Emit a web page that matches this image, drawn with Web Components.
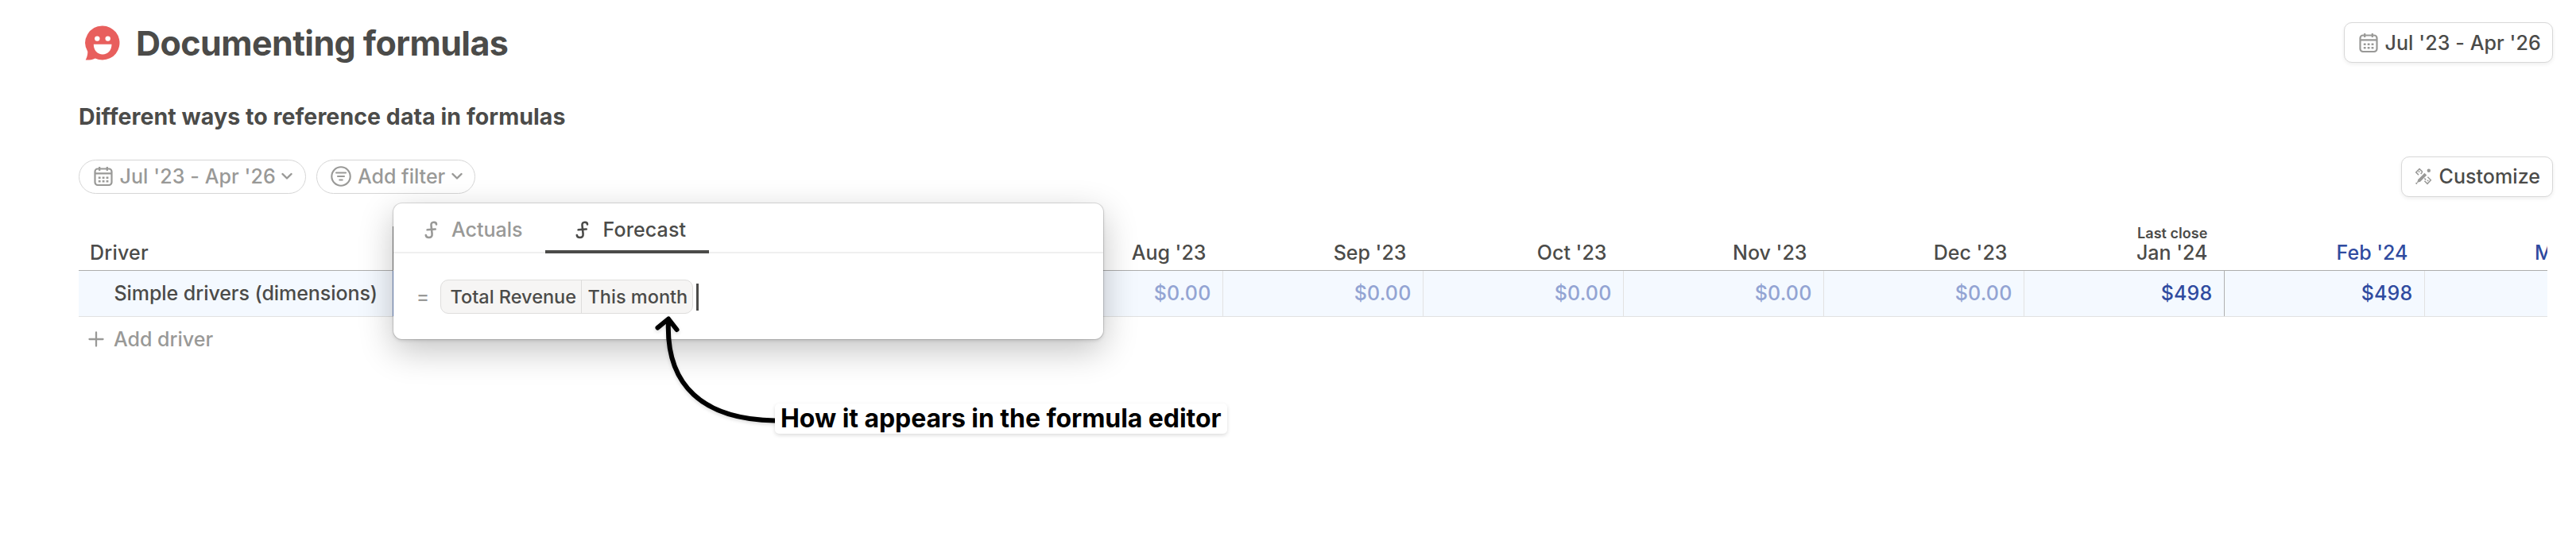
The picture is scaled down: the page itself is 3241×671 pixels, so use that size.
<!DOCTYPE html>
<html lang="en">
<head>
<meta charset="utf-8">
<title>Documenting formulas</title>
<style>
html,body{margin:0;background:#fff}
body{width:3241px;height:671px;overflow:hidden}
</style>
</head>
<body>
<formula-page></formula-page>
<script>
const define = (name, html) => {
  const t = document.createElement('template');
  t.innerHTML = html;
  customElements.define(name, class extends HTMLElement {
    constructor() {
      super();
      this.attachShadow({ mode: 'open' }).append(t.content.cloneNode(true));
    }
  });
};

const ICONS = {
  smile: [44, 44, '<path d="M22 .5a21.5 21.5 0 1 1-9.3 40.9C9 43.3 4.500 43.800.7 43.500 2 41 3.500 37 3.300 33A21.500 21.500 0 0 1 22 .5Z" fill="#e85f5d"/><circle cx="15.300" cy="16.600" r="3.200" fill="#fff"/><circle cx="28.700" cy="16.600" r="3.200" fill="#fff"/><path d="M10.800 23.800H33.500C33.500 31.500 28.500 36.500 22.100 36.500S10.800 31.500 10.800 23.800Z" fill="#fff"/>'],
  calendar: [24, 26, '<g fill="none" stroke="currentColor" stroke-width="2.200"><rect x="1.500" y="3.500" width="21" height="20.500" rx="3.500"/><path d="M1.500 9.300H22.500M7.200 1V6M16.800 1V6"/></g><path fill="currentColor" d="M5.800 13.500h2.800v2.600H5.800zM10.700 13.500h2.800v2.600h-2.800zM15.600 13.500h2.800v2.600h-2.800zM5.800 17.900h2.800v2.600H5.800zM10.700 17.900h2.800v2.600h-2.800zM15.600 17.900h2.800v2.600h-2.800z"/>'],
  filter: [26, 26, '<g fill="none" stroke="currentColor" stroke-width="2.100" stroke-linecap="round"><circle cx="13" cy="13" r="11.700"/><path d="M7 8.500H19M9 13H17M11.300 17.500H14.700"/></g>'],
  chevron: [14, 10, '<path d="M1.500 2 7 7.500 12.500 2" fill="none" stroke="currentColor" stroke-width="2.400" stroke-linecap="round" stroke-linejoin="round"/>'],
  customize: [22, 22, '<path d="M5.200 16.800 13.800 8.200" fill="none" stroke="currentColor" stroke-width="4"/><path d="M2.700 19.300 6.500 17.800 4.200 15.500Z" fill="currentColor"/><circle cx="17.800" cy="3.700" r="2.200" fill="currentColor"/><circle cx="2.300" cy="19.800" r="1.100" fill="currentColor"/><g fill="none" stroke="currentColor" stroke-width="1.500"><path d="M5 9.200 1.700 5.900 6 1.600 9.800 5.400M4.800 5.600 6.300 4.600M7.700 8 9.800 5.400"/><path d="M16.400 11.800 20.300 15.700 16 20.300 12.400 16.700M17.300 15.800 15.800 16.800M12.400 13.600 14.200 15.600"/></g>'],
  formula: [17, 23, '<path d="M15 4.500C15 2.300 13.500 1.700 11.900 1.700 9.300 1.700 8.300 3.300 8.500 5.600L9.600 16.500C9.900 19.500 8.300 21 5.700 21 3.600 21 1.900 20 1.800 18M3.600 11.300 13.700 10.500" fill="none" stroke="currentColor" stroke-width="2.600" stroke-linecap="round"/>'],
  plus: [20, 20, '<path d="M10 1.500V18.500M1.500 10H18.500" fill="none" stroke="currentColor" stroke-width="2.300" stroke-linecap="round"/>']
};

customElements.define('ui-icon', class extends HTMLElement {
  connectedCallback() {
    if (this.shadowRoot) return;
    const [w, h, body] = ICONS[this.getAttribute('name')];
    this.attachShadow({ mode: 'open' }).innerHTML =
      `<style>:host{display:block;flex:none;width:${w}px;height:${h}px}svg{display:block}</style>
       <svg width="${w}" height="${h}" viewBox="0 0 ${w} ${h}">${body}</svg>`;
  }
});

define('ui-button', `<style>
:host{display:flex;align-items:center;box-sizing:border-box;height:51px;padding:0 0 0 18px;gap:9px;border:1px solid #d8d8d8;border-radius:10px;background:#fff;color:#4b4b49;box-shadow:0 2px 5px rgba(0,0,0,.07);white-space:nowrap}
::slotted(ui-icon){color:#999997}
</style><slot></slot>`);

define('filter-pill', `<style>
:host{display:flex;align-items:center;box-sizing:border-box;height:43px;padding:0 0 1px 18px;border:1px solid #d6d6d6;border-radius:22px;background:#fff;color:#999997;white-space:nowrap}
span{margin:0 7.500px 0 8.500px}
</style><slot name="icon"></slot><span><slot></slot></span><ui-icon name="chevron"></ui-icon>`);

define('month-head', `<style>
:host{display:flex;flex-direction:column;justify-content:flex-end;align-items:flex-end;box-sizing:border-box;width:252px;height:82px;padding:0 21.500px 6px 0;flex:none;color:#4b4b49;line-height:32px}
:host([forecast]){color:#2f4b9f}
::slotted([slot=note]){font-size:18px;font-weight:600;letter-spacing:.05px;line-height:18px;margin-bottom:-1px}
</style><slot name="note"></slot><div><slot></slot></div>`);

define('value-cell', `<style>
:host{display:flex;align-items:center;justify-content:flex-end;box-sizing:border-box;width:252px;height:57px;padding:0 14.500px 1px 0;flex:none;border-right:1px solid #e2e2e2;color:#93a4d3;letter-spacing:.2px}
:host([set]){color:#2f4b9f}
:host([close]){border-right-color:#b0b0b0}
</style><slot></slot>`);

define('driver-table', `<style>
:host{display:block;width:3106px;overflow:hidden}
.head,.row{display:flex}
.head{border-bottom:1px solid #adadad}
.row{background:#f4f9ff;border-bottom:1px solid #e2e2e2}
.name{box-sizing:border-box;flex:none;width:396px;color:#4b4b49;display:flex}
.head .name{height:82px;align-items:flex-end;padding:0 0 6px 14px;line-height:32px;letter-spacing:.2px}
.head .name{background:linear-gradient(#858585,#858585) 395px 27px/1px 56px no-repeat}
.row .name{height:57px;align-items:center;padding:0 0 1px 44.500px;border-right:1px solid #7f9fdb}
.gap{flex:none;width:540px}
.add{display:flex;align-items:center;height:56px;padding-left:12px;gap:12px;color:#999997}
</style>
<div class="head"><div class="name">Driver</div><div class="gap"></div>
<month-head></month-head><month-head>Aug '23</month-head><month-head>Sep '23</month-head><month-head>Oct '23</month-head><month-head>Nov '23</month-head><month-head>Dec '23</month-head><month-head><span slot="note">Last close</span>Jan '24</month-head><month-head forecast>Feb '24</month-head><month-head forecast>Mar '24</month-head></div>
<div class="row"><div class="name"><span style="letter-spacing:-.06px">Simple drivers (dimensions)</span></div><div class="gap"></div>
<value-cell></value-cell><value-cell>$0.00</value-cell><value-cell>$0.00</value-cell><value-cell>$0.00</value-cell><value-cell>$0.00</value-cell><value-cell>$0.00</value-cell><value-cell set close>$498</value-cell><value-cell set>$498</value-cell><value-cell></value-cell></div>
<div class="add"><ui-icon name="plus"></ui-icon><span>Add driver</span></div>`);

define('editor-tab', `<style>
:host{display:flex;align-items:center;gap:18px;height:63px;box-sizing:border-box;padding:3px 0 0 38px;color:#999997}
:host([active]){color:#4b4b49;box-shadow:inset 0 -4px #4b4b49}
</style><ui-icon name="formula"></ui-icon><span><slot></slot></span>`);

define('formula-editor', `<style>
:host{display:block;position:absolute;left:495px;top:256px;width:893px;height:170.500px;border-radius:11px;background:#fff;box-shadow:0 0 0 1px rgba(0,0,0,.12),0 2px 4px rgba(0,0,0,.12),0 14px 44px rgba(0,0,0,.24)}
.tabs{display:flex;height:61px;border-bottom:2px solid #efefef}
.line{display:flex;align-items:center;padding:32px 0 0 29px;height:45px}
.eq{font-size:24px;color:#999997;width:30px}
.chip{display:flex;box-sizing:border-box;width:318px;height:43px;border:1px solid #dedddc;border-radius:10px;background:#f6f5f4;color:#4b4b49;font-size:23.500px;letter-spacing:0;line-height:41px;white-space:nowrap}
.chip span{box-sizing:border-box;flex:none;width:175.500px;padding-left:11.500px}
.chip span+span{width:140px;padding-left:8px;border-left:1px solid #dedddc}
.caret{width:2.500px;height:34px;background:#4b4b49;margin-left:4px}
</style>
<div class="tabs"><editor-tab style="width:191px;padding-left:39px;gap:17px">Actuals</editor-tab><editor-tab active style="width:206px;gap:17.500px;letter-spacing:.12px">Forecast</editor-tab></div>
<div class="line"><div class="eq">=</div><div class="chip"><span>Total Revenue</span><span>This month</span></div><div class="caret"></div></div>`);

define('callout-note', `<style>
:host{display:block;position:absolute;left:815px;top:390px;color:#000}
svg{display:block;overflow:visible;filter:drop-shadow(0 2px 2px rgba(0,0,0,.15))}
.label{position:absolute;left:160px;top:118px;box-sizing:border-box;width:569px;height:38px;padding-left:7px;border-radius:5px;background:#fff;box-shadow:0 2px 5px rgba(0,0,0,.14);font-size:32px;font-weight:650;letter-spacing:-.06px;line-height:38px;white-space:nowrap}
</style>
<svg width="170" height="150" viewBox="0 0 170 150" fill="none" stroke="#000" stroke-width="6" stroke-linecap="round" stroke-linejoin="round"><path d="M160 139.500C70 138 22 96 26 13M12.500 22.500 26 11.500 36.500 25"/></svg>
<div class="label"><slot></slot></div>`);

define('formula-page', `<style>
:host{display:block;position:relative;box-sizing:border-box;width:3241px;height:671px;padding:0 29.500px 0 99px;overflow:hidden;font:500 25px Inter,"Liberation Sans",sans-serif;letter-spacing:0;color:#4b4b49}
header,.tools{display:flex;align-items:center;justify-content:space-between}
header{height:107px}
.title{display:flex;align-items:center;gap:20px;margin-left:8px}
h1{margin:0;font-size:43px;font-weight:700;letter-spacing:-.57px;line-height:56px}
h2{margin:0;height:79px;line-height:80px;font-size:28.500px;font-weight:700;letter-spacing:.06px}
.tools{height:72px}
.pills{display:flex;gap:13px}
</style>
<header><div class="title"><ui-icon name="smile"></ui-icon><h1>Documenting formulas</h1></div>
<ui-button style="width:262.500px;gap:8.500px;letter-spacing:.1px"><ui-icon name="calendar"></ui-icon><span>Jul '23 - Apr '26</span></ui-button></header>
<h2>Different ways to reference data in formulas</h2>
<div class="tools"><div class="pills">
<filter-pill style="width:285.500px;letter-spacing:.1px"><ui-icon slot="icon" name="calendar"></ui-icon>Jul '23 - Apr '26</filter-pill>
<filter-pill style="width:200px;padding-left:17px"><ui-icon slot="icon" name="filter"></ui-icon>Add filter</filter-pill></div>
<ui-button style="width:190.500px;padding-left:15.500px;gap:9px;letter-spacing:.06px"><ui-icon name="customize"></ui-icon><span>Customize</span></ui-button></div>
<driver-table></driver-table>
<formula-editor></formula-editor>
<callout-note>How it appears in the formula editor</callout-note>`);
</script>
</body>
</html>
